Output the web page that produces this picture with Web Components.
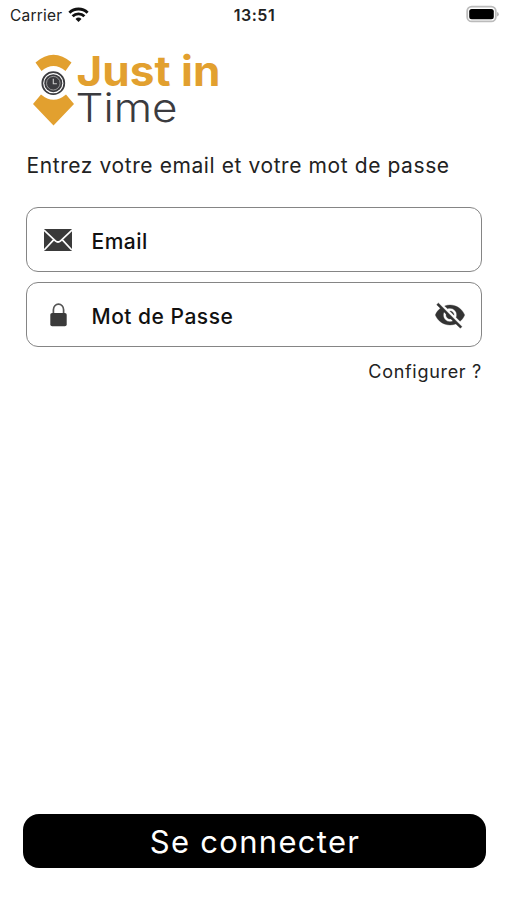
<!DOCTYPE html>
<html lang="fr">
<head>
<meta charset="utf-8">
<title>Just in Time</title>
<style>
body{margin:0;background:#fff;font-family:Inter,"Liberation Sans",sans-serif;color:#222}
</style>
</head>
<body>
<login-screen></login-screen>
<script>
const define = (name, html) => customElements.define(name, class extends HTMLElement {
  constructor() {
    super();
    this.attachShadow({ mode: 'open' }).innerHTML = html;
  }
});

define('status-bar', `
<style>
:host{display:grid;grid-template-columns:1fr auto 1fr;align-items:center;height:30px;padding:0 8px 0 10px;box-sizing:border-box;color:#222}
.left{display:flex;align-items:center;gap:6px;font-size:15.5px;letter-spacing:.2px}
.time{font-size:16px;font-weight:600;letter-spacing:.5px}
svg{display:block}
.battery{justify-self:end;margin-bottom:2px}
</style>
<div class="left"><span>Carrier</span>
<svg width="21" height="16" viewBox="0 0 21 16" fill="none" stroke="#111" stroke-width="2.9"><path d="M1.4 5.7a13 13 0 0 1 18.2 0"/><path d="M4.6 9.3a8.4 8.4 0 0 1 11.8 0"/><path d="M10.5 15l-3-3.1a4.3 4.3 0 0 1 6 0z" fill="#111" stroke="none"/></svg></div>
<span class="time">13:51</span>
<svg class="battery" width="33" height="18" viewBox="0 0 33 18"><rect x="1.2" y="1.6" width="28.6" height="14.8" rx="4.5" fill="#fff" stroke="#bbb" stroke-width="1.8"/><rect x="3.2" y="4" width="24.6" height="10.2" rx="2.5"/><path d="M31.2 7v4.4q1.5-.5 1.5-2.2T31.2 7z" fill="#aaa"/></svg>`);

define('brand-logo', `
<style>:host{display:block}svg{display:block;overflow:visible}text{font-family:Inter,"Liberation Sans",sans-serif}</style>
<svg width="200" height="90" viewBox="20 45 200 90">
<path d="M35.5 62.5Q53.5 47 71.5 62.5L65.5 71Q53.5 61 41.5 71z" fill="#e2a02f"/>
<path d="M41 94.5Q53.5 105 66 94.5L74 104L53.5 125.5L33 104z" fill="#e2a02f"/>
<circle cx="53.3" cy="83.2" r="11" fill="none" stroke="#3b3b3f" stroke-width="1.7"/>
<circle cx="53.3" cy="83.2" r="9" fill="#3b3b3f"/>
<circle cx="53.3" cy="83.2" r="6.8" fill="none" stroke="#a2a2a2" stroke-width=".9"/>
<path d="M53.3 78.8v5h3.6" fill="none" stroke="#ccc" stroke-width="1.1"/>
<text x="76.5" y="85.7" font-size="41" font-weight="750" fill="#e2a02f" textLength="144" lengthAdjust="spacingAndGlyphs">Just in</text>
<text x="75.5" y="121.8" font-size="40" font-weight="300" fill="#3b3b3f" textLength="102" lengthAdjust="spacingAndGlyphs">Time</text>
</svg>`);

define('icon-mail', `
<style>:host{display:block}svg{display:block}</style>
<svg width="28" height="22" viewBox="0 0 28 22"><rect width="28" height="22" rx="1.2" fill="#3a3a3a"/><path d="M0 1.2l11.4 10.6q2.6 2.4 5.2 0L28 1.2M.2 21l9.9-10.6M27.8 21l-9.9-10.6" fill="none" stroke="#fff" stroke-width="1.7"/></svg>`);

define('icon-lock', `
<style>:host{display:block}svg{display:block}</style>
<svg width="28" height="24" viewBox="0 0 28 24"><path d="M9.4 12V6.7a5.1 5.6 0 0 1 10.2 0V12" fill="none" stroke="#555" stroke-width="1.7"/><rect x="6.3" y="10" width="16.4" height="13.2" rx="1.8" fill="#3a3a3a"/></svg>`);

define('icon-eye-off', `
<style>:host{display:block}svg{display:block}</style>
<svg width="32" height="32" viewBox="0 0 24 24" fill="#333" stroke="#333" stroke-width=".25"><path d="M12 7c2.76 0 5 2.24 5 5 0 .65-.13 1.26-.36 1.83l2.92 2.92c1.51-1.26 2.7-2.89 3.43-4.75-1.73-4.39-6-7.5-11-7.5-1.4 0-2.74.25-3.98.7l2.16 2.16C10.74 7.13 11.35 7 12 7zM2 4.27l2.28 2.28.46.46C3.08 8.3 1.78 10.02 1 12c1.73 4.39 6 7.5 11 7.5 1.55 0 3.03-.3 4.38-.84l.42.42L19.73 22 21 20.73 3.27 3 2 4.27zM7.53 9.8l1.55 1.55c-.05.21-.08.43-.08.65 0 1.66 1.34 3 3 3 .22 0 .44-.03.65-.08l1.55 1.55c-.67.33-1.41.53-2.2.53-2.76 0-5-2.24-5-5 0-.79.2-1.53.53-2.2zm4.31-.78l3.15 3.15.02-.16c0-1.66-1.34-3-3-3l-.17.01z"/></svg>`);

define('form-field', `
<style>
:host{display:flex;align-items:center;box-sizing:border-box;height:65px;border:1.4px solid #858585;border-radius:12px;padding:0 15px 0 17px;color:#111;font-size:21px;font-weight:500;letter-spacing:.5px}
.label{flex:1;margin-left:19.5px;padding-top:4px}
</style>
<slot name="icon"></slot><span class="label"><slot></slot></span><slot name="action"></slot>`);

define('primary-button', `
<style>
:host{display:block}
button{display:block;width:100%;height:54px;border:0;border-radius:16px;padding:2px 0 0 2px;background:#000;color:#fff;font:400 31px Inter,"Liberation Sans",sans-serif;letter-spacing:1.3px}
</style>
<button><slot></slot></button>`);

define('login-screen', `
<style>
:host{display:flex;flex-direction:column;height:900px;box-sizing:border-box;padding-bottom:32.5px}
brand-logo{margin:15px 0 0 20px}
p{margin:18px 0 0 26.5px;font-size:21px;line-height:26px;letter-spacing:.59px;white-space:nowrap}
.fields{display:flex;flex-direction:column;gap:10px;margin:28px 25px 0 26px}
.config{align-self:flex-end;margin:13px 25px 0 0;font-size:18px;line-height:24px;letter-spacing:.7px}
primary-button{margin:auto 21.5px 0 22.5px}
</style>
<status-bar></status-bar>
<brand-logo></brand-logo>
<p>Entrez votre email et votre mot de passe</p>
<div class="fields">
<form-field><icon-mail slot="icon"></icon-mail>Email</form-field>
<form-field><icon-lock slot="icon"></icon-lock>Mot de Passe<icon-eye-off slot="action"></icon-eye-off></form-field>
</div>
<span class="config">Configurer ?</span>
<primary-button>Se connecter</primary-button>`);
</script>
</body>
</html>
